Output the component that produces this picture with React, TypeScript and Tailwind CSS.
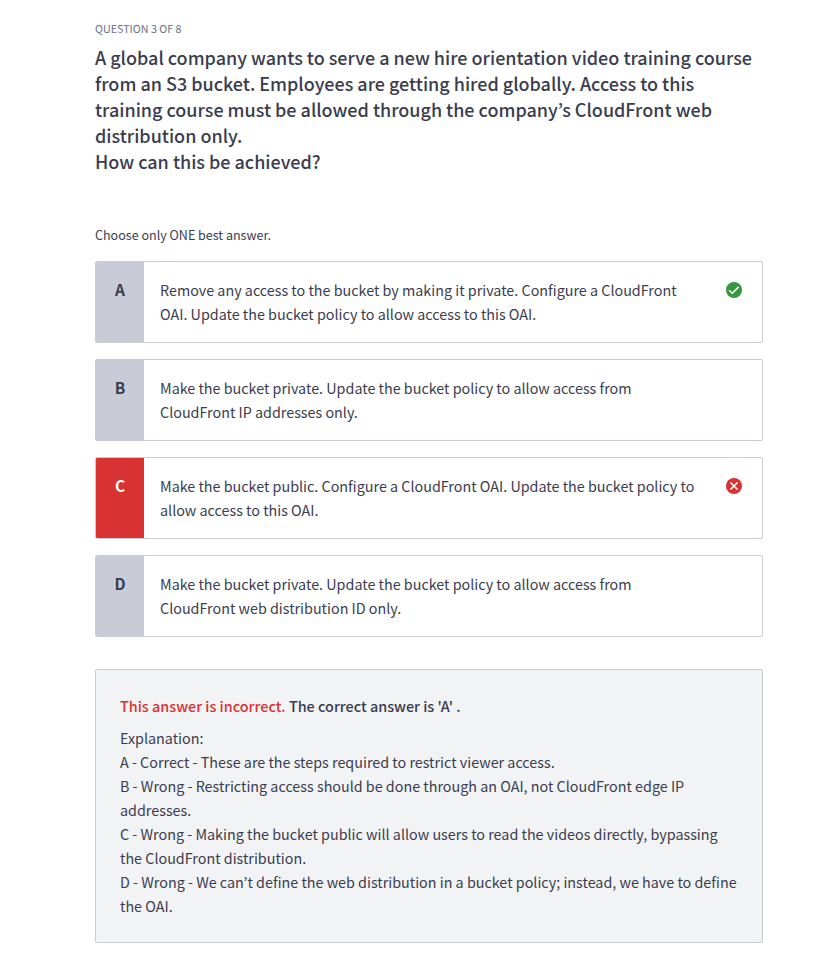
type Status = "correct" | "wrong" | null;

const choices: { letter: string; lines: string[]; status: Status }[] = [
  {
    letter: "A",
    lines: [
      "Remove any access to the bucket by making it private. Configure a CloudFront",
      "OAI. Update the bucket policy to allow access to this OAI.",
    ],
    status: "correct",
  },
  {
    letter: "B",
    lines: [
      "Make the bucket private. Update the bucket policy to allow access from",
      "CloudFront IP addresses only.",
    ],
    status: null,
  },
  {
    letter: "C",
    lines: [
      "Make the bucket public. Configure a CloudFront OAI. Update the bucket policy to",
      "allow access to this OAI.",
    ],
    status: "wrong",
  },
  {
    letter: "D",
    lines: [
      "Make the bucket private. Update the bucket policy to allow access from",
      "CloudFront web distribution ID only.",
    ],
    status: null,
  },
];

const question = [
  "A global company wants to serve a new hire orientation video training course",
  "from an S3 bucket. Employees are getting hired globally. Access to this",
  "training course must be allowed through the company’s CloudFront web",
  "distribution only.",
  "How can this be achieved?",
];

const explanation = [
  "Explanation:",
  "A - Correct - These are the steps required to restrict viewer access.",
  "B - Wrong - Restricting access should be done through an OAI, not CloudFront edge IP",
  "addresses.",
  "C - Wrong - Making the bucket public will allow users to read the videos directly, bypassing",
  "the CloudFront distribution.",
  "D - Wrong - We can’t define the web distribution in a bucket policy; instead, we have to define",
  "the OAI.",
];

function Lines({ lines }: { lines: string[] }) {
  return (
    <>
      {lines.map((line) => (
        <span key={line} className="block whitespace-nowrap">
          {line}
        </span>
      ))}
    </>
  );
}

function StatusIcon({ status }: { status: "correct" | "wrong" }) {
  return (
    <svg viewBox="0 0 16 16" className="size-4" fill="none" stroke="#fff">
      <circle cx="8" cy="8" r="8" stroke="none" fill={status === "correct" ? "#36973f" : "#d93232"} />
      {status === "correct" ? (
        <path d="M3.2 8.3 6.2 11.2 12.7 4.9" strokeWidth="1.5" />
      ) : (
        <path d="M4.5 4.5 11.5 11.5M11.5 4.5 4.5 11.5" strokeWidth="1.6" />
      )}
    </svg>
  );
}

export default function App() {
  return (
    <main className="min-h-[956px] bg-white pt-5 pr-[70px] pl-[95px] font-['Noto_Sans_CJK_JP','Noto_Sans',sans-serif] text-[14.33px] leading-6 text-[#3a3c4f]">
      <p className="text-[10.74px] leading-[18px] text-[#6c6f7f]">QUESTION 3 OF 8</p>
      <h1 className="mt-1.5 text-[17.985px] leading-[26px] font-medium">
        <Lines lines={question} />
      </h1>
      <p className="mt-[51px] text-[12.54px] leading-5">Choose only ONE best answer.</p>
      <ul className="mt-4 flex flex-col gap-4">
        {choices.map(({ letter, lines, status }) => (
          <li key={letter} className="flex h-[82px] overflow-hidden rounded-xs border border-[#c9ccd6]">
            <div
              className={
                status === "wrong"
                  ? "w-12 bg-[#d93232] pt-[15px] text-center text-[15.5px] font-bold text-white"
                  : "w-12 bg-[#c9ccd6] pt-[15px] text-center text-[15.5px] font-bold"
              }
            >
              {letter}
            </div>
            <div className="flex-1 pt-4 pl-4">
              <Lines lines={lines} />
            </div>
            <div className="pt-5 pr-5">{status && <StatusIcon status={status} />}</div>
          </li>
        ))}
      </ul>
      <section className="mt-8 h-[274px] rounded-xs border border-[#c9ccd6] bg-[#f2f3f5] px-6 pt-6">
        <p className="text-[14.4px] font-medium">
          <span className="text-[#d93232]">This answer is incorrect.</span> The correct answer is 'A' .
        </p>
        <div className="mt-2">
          <Lines lines={explanation} />
        </div>
      </section>
    </main>
  );
}
